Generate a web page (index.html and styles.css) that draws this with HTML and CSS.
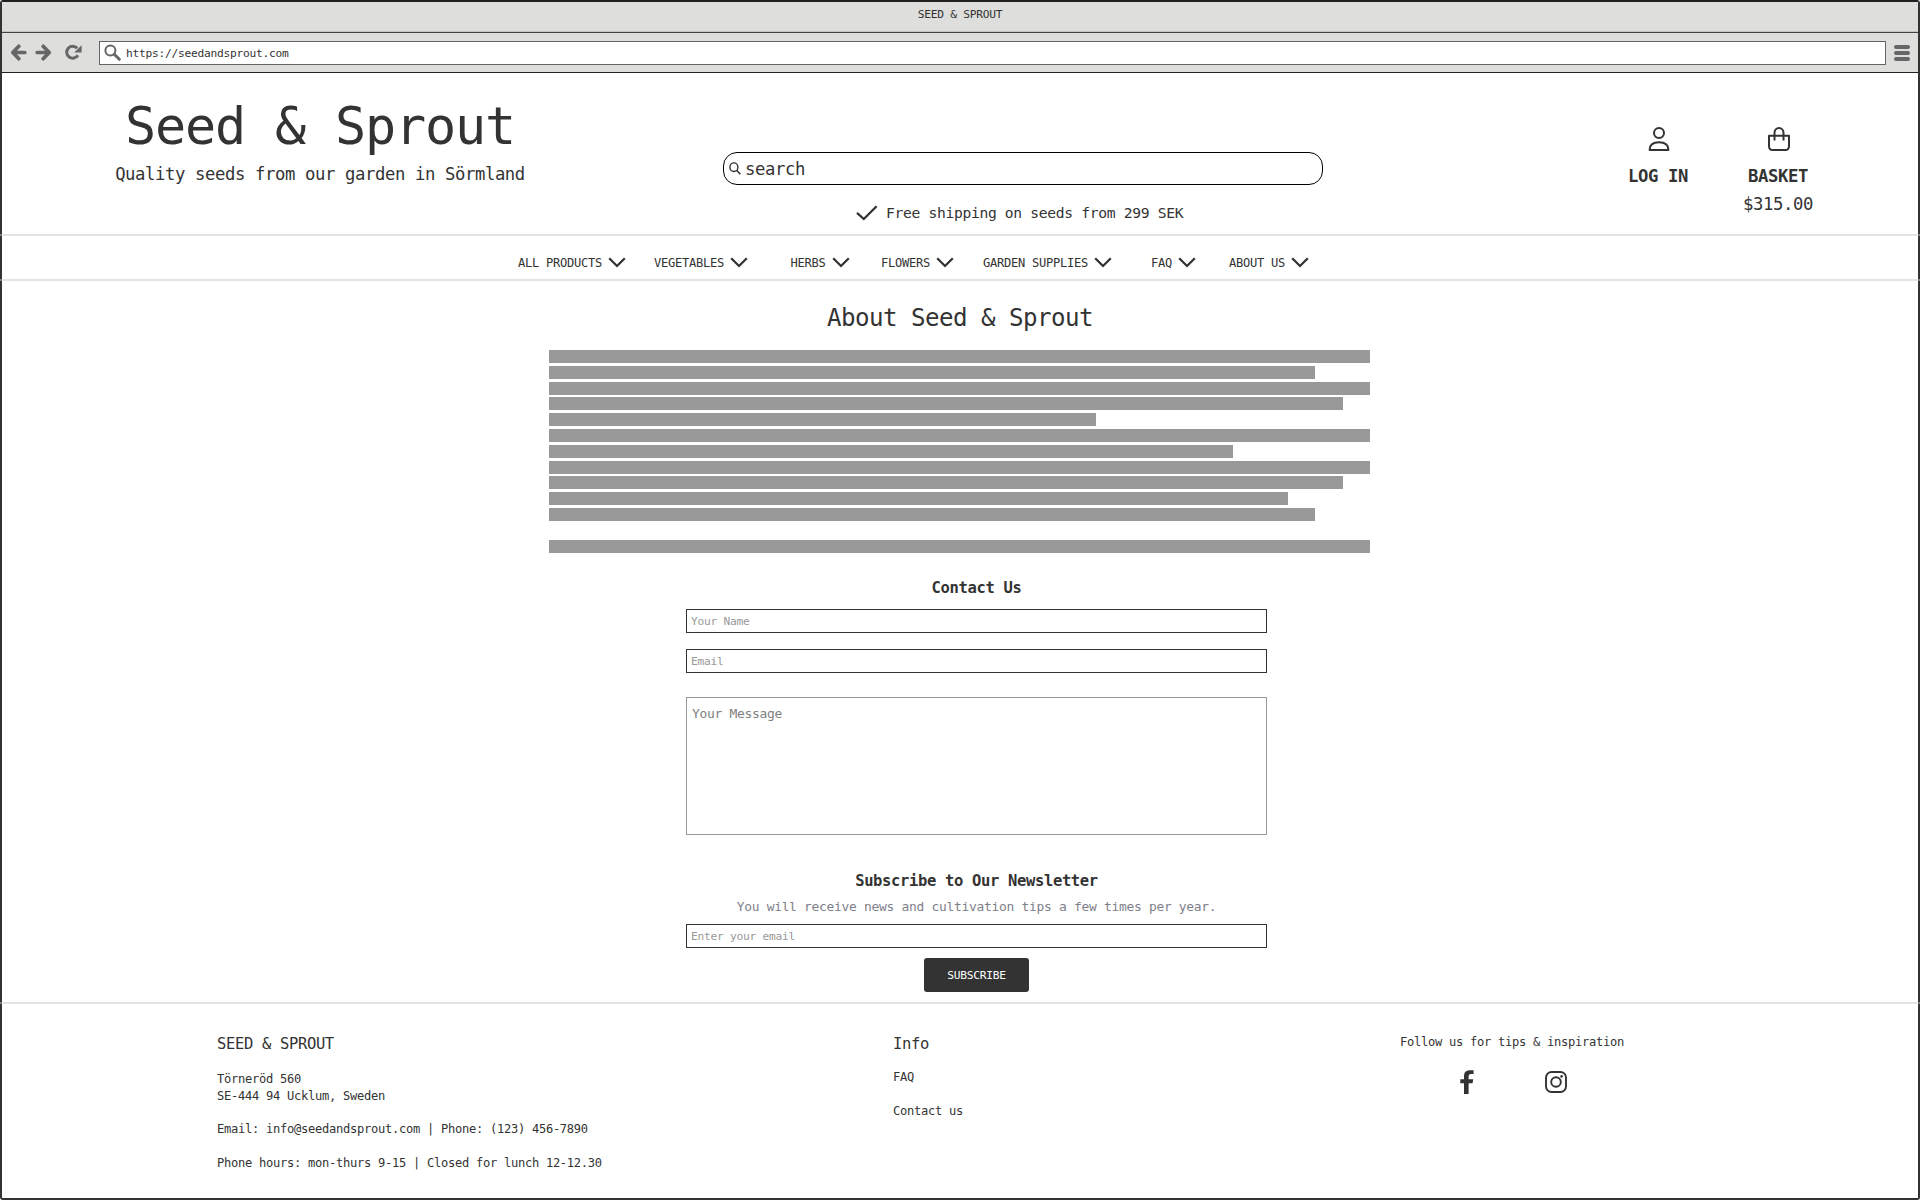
FILE: index.html
```html
<!DOCTYPE html>
<html lang="en">
<head>
<meta charset="utf-8">
<title>Seed &amp; Sprout</title>
<link rel="stylesheet" href="styles.css">
</head>
<body>
<svg width="0" height="0" class="defs">
  <symbol id="chevron" viewBox="0 0 18 11"><path d="M1.2 1.3 9 9 16.8 1.3" fill="none" stroke="#333" stroke-width="2.3"/></symbol>
</svg>
<div class="window">
  <div class="titlebar">SEED &amp; SPROUT</div>
  <div class="toolbar">
    <svg class="back" width="17" height="17" viewBox="0 0 17 17"><path d="M8.8 2.3 2.8 8.5l6 6.2M3.5 8.5h11.3" fill="none" stroke="#666" stroke-width="3.7" stroke-linecap="round" stroke-linejoin="round"/></svg>
    <svg class="forward" width="17" height="17" viewBox="0 0 17 17"><path d="m8.2 2.3 6 6.2-6 6.2M13.5 8.5H2.2" fill="none" stroke="#666" stroke-width="3.7" stroke-linecap="round" stroke-linejoin="round"/></svg>
    <svg class="reload" width="17" height="17" viewBox="0 0 17 17"><path d="M12.9 11.2A6 6 0 1 1 12.2 4.2" fill="none" stroke="#666" stroke-width="3"/><path d="M16.6 1.2v7.2H9.2z" fill="#666"/></svg>
    <div class="address">
      <svg width="17" height="17" viewBox="0 0 17 17"><circle cx="6.4" cy="6.4" r="5" fill="none" stroke="#666" stroke-width="2"/><path d="m10.3 10.3 5 5" stroke="#666" stroke-width="3" stroke-linecap="round"/></svg>
      <span>https://seedandsprout.com</span>
    </div>
    <svg class="menu" width="16" height="16" viewBox="0 0 16 16"><g fill="#666"><rect width="16" height="4" rx="2"/><rect y="6" width="16" height="4" rx="2"/><rect y="12" width="16" height="4" rx="2"/></g></svg>
  </div>

  <header class="header">
    <div class="brand">
      <h1>Seed &amp; Sprout</h1>
      <p>Quality seeds from our garden in Sörmland</p>
    </div>
    <div class="find">
      <div class="search">
        <svg width="12" height="13" viewBox="0 0 12 13"><ellipse cx="4.9" cy="5.2" rx="4" ry="4.3" fill="none" stroke="#333" stroke-width="1.4"/><path d="m7.8 8.5 3.6 3.7" stroke="#333" stroke-width="1.6"/></svg>
        <span>search</span>
      </div>
      <div class="shipping">
        <svg width="22" height="16" viewBox="0 0 22 16"><path d="m1 7.8 6.8 6.2L20.6 1.2" fill="none" stroke="#333" stroke-width="2.3"/></svg>
        <span>Free shipping on seeds from 299 SEK</span>
      </div>
    </div>
    <div class="account login">
      <svg width="22" height="24" viewBox="0 0 22 24"><g fill="none" stroke="#333" stroke-width="2"><circle cx="11" cy="6" r="5"/><path d="M1.6 23C1.6 18 5.3 15.3 11 15.3S20.4 18 20.4 23Z" stroke-linejoin="round"/></g></svg>
      <b>LOG IN</b>
    </div>
    <div class="account basket">
      <svg width="22" height="24" viewBox="0 0 22 24"><g fill="none" stroke="#333" stroke-width="2"><path d="M1 8.8h20v10.4q0 3.8-3.8 3.8H4.8Q1 23 1 19.2z" stroke-linejoin="round"/><path d="M6.5 13.5V5.8a4.5 4.8 0 0 1 9 0v7.7"/></g></svg>
      <b>BASKET</b>
      <span>$315.00</span>
    </div>
  </header>
  <hr>
  <nav class="nav">
    <a>ALL PRODUCTS<svg width="18" height="11"><use href="#chevron"/></svg></a>
    <a class="vegetables">VEGETABLES<svg width="18" height="11"><use href="#chevron"/></svg></a>
    <a class="herbs">HERBS<svg width="18" height="11"><use href="#chevron"/></svg></a>
    <a class="flowers">FLOWERS<svg width="18" height="11"><use href="#chevron"/></svg></a>
    <a class="supplies">GARDEN SUPPLIES<svg width="18" height="11"><use href="#chevron"/></svg></a>
    <a class="faq">FAQ<svg width="18" height="11"><use href="#chevron"/></svg></a>
    <a class="about">ABOUT US<svg width="18" height="11"><use href="#chevron"/></svg></a>
  </nav>
  <hr>
  <main class="main">
    <h2>About Seed &amp; Sprout</h2>
    <div class="bars">
      <i style="width:821px"></i>
      <i style="width:766px"></i>
      <i style="width:821px"></i>
      <i style="width:794px"></i>
      <i style="width:547px"></i>
      <i style="width:821px"></i>
      <i style="width:684px"></i>
      <i style="width:821px"></i>
      <i style="width:794px"></i>
      <i style="width:739px"></i>
      <i style="width:766px"></i>
      <i style="width:0"></i>
      <i style="width:821px"></i>
    </div>
    <div class="form">
      <h3>Contact Us</h3>
      <div class="field">Your Name</div>
      <div class="field email">Email</div>
      <div class="message">Your Message</div>
      <h3 class="newsletter">Subscribe to Our Newsletter</h3>
      <p>You will receive news and cultivation tips a few times per year.</p>
      <div class="field signup">Enter your email</div>
      <div class="button">SUBSCRIBE</div>
    </div>
  </main>
  <hr>
  <footer class="footer">
    <section class="company">
      <h4>SEED &amp; SPROUT</h4>
      <p>Törneröd 560<br>SE-444 94 Ucklum, Sweden</p>
      <p>Email: info@seedandsprout.com | Phone: (123) 456-7890</p>
      <p>Phone hours: mon-thurs 9-15 | Closed for lunch 12-12.30</p>
    </section>
    <section class="info">
      <h4>Info</h4>
      <p>FAQ</p>
      <p>Contact us</p>
    </section>
    <section class="social">
      <p>Follow us for tips &amp; inspiration</p>
      <div class="icons">
        <svg width="14" height="24" viewBox="0 0 14 24"><path d="M4 24V13.2H.3V9.2H4V6Q4 .4 9.4.2L13.6.3V4H10.8Q8.6 4 8.6 6.2v3h4.6l-.6 4h-4V24z" fill="#333"/></svg>
        <svg width="22" height="22" viewBox="0 0 22 22"><g fill="none" stroke="#333" stroke-width="1.9"><rect x="1" y="1" width="20" height="20" rx="5.5"/><circle cx="11" cy="11" r="4.8"/></g><circle cx="16.6" cy="5.4" r="1.3" fill="#333"/></svg>
      </div>
    </section>
  </footer>
</div>
</body>
</html>
```
FILE: styles.css
```css
* { box-sizing: border-box; margin: 0; padding: 0; letter-spacing: -.0227em; }
body {
  width: 1920px; height: 1200px; overflow: hidden; background: #fff;
  font-family: "DejaVu Sans Mono", monospace; color: #333;
}
svg { display: block; flex: none; }
.defs { position: absolute; }
p, span, a, b, h1, h2, h3, h4, .titlebar, .button { white-space: nowrap; }
h1, h2, h4 { font-weight: 400; }
.window {
  width: 1920px; height: 1200px; display: flex; flex-direction: column;
  border: 2px solid #333; border-top-color: #231f20; border-radius: 3px; background: #fff;
}
hr { flex: none; border: 0; height: 2px; margin: 0 -2px; background: rgba(200, 200, 200, .5); }

.titlebar {
  height: 30px; background: #dededc; border-bottom: 1px solid #c4c4c2;
  text-align: center; font-size: 11.22px; line-height: 24px; padding-top: 1px;
}
.toolbar {
  height: 41px; background: #dededc; border-top: 1px solid #444; border-bottom: 1px solid #222;
  display: flex; align-items: center; padding: 0 8px;
}
.forward { margin-left: 8px; }
.reload { margin-left: 13px; }
.address {
  flex: 1; height: 24px; margin: 0 8px 0 17px; padding-left: 4px; background: #fff; border: 1px solid #666;
  display: flex; align-items: center; gap: 5px; font-size: 11.22px;
}
.address span { padding-top: 2px; }

.header { height: 161px; display: flex; align-items: flex-start; }
.brand { width: 410px; margin: 23px 0 0 113px; text-align: center; }
.brand h1 { font-size: 51.8px; line-height: 60px; }
.brand p { font-size: 17.26px; line-height: 24px; margin-top: 6px; }
.find { width: 600px; margin: 79px 0 0 198px; }
.search {
  height: 33px; border: 1px solid #000; border-radius: 14px; padding-left: 5px;
  display: flex; align-items: center; gap: 4px; font-size: 17.26px;
}
.search span { padding-top: 1px; }
.shipping { display: flex; align-items: center; gap: 8px; margin-top: 16px; padding-left: 133px; font-size: 14.67px; line-height: 24px; }
.account { display: flex; flex-direction: column; align-items: center; margin-top: 54px; font-size: 17.26px; line-height: 24px; }
.account svg { margin-left: 2px; }
.account b { margin: 13px 0 4px; }
.login { width: 60px; margin-left: 305px; }
.basket { width: 70px; margin-left: 55px; }

.nav { height: 43px; display: flex; align-items: flex-start; padding: 17px 0 0 516px; font-size: 12.08px; line-height: 20px; }
.nav a { display: flex; align-items: center; gap: 6.5px; }
.nav svg { margin-top: -1px; }
.vegetables { margin-left: 27.5px; }
.herbs { margin-left: 42px; }
.flowers { margin-left: 31px; }
.supplies { margin-left: 28.5px; }
.faq { margin-left: 38.5px; }
.about { margin-left: 32.5px; }

.main { height: 721px; padding-top: 21px; }
.main h2 { font-size: 24.16px; line-height: 32px; text-align: center; }
.bars { width: 821px; margin: 16px 0 0 547px; display: flex; flex-direction: column; gap: 2.8px; }
.bars i { height: 13px; background: #999; }
.form { width: 581px; margin: 23.4px 0 0 684px; display: flex; flex-direction: column; }
.form h3 { font-size: 15.53px; line-height: 24px; text-align: center; }
.field { height: 24px; margin-top: 9px; padding-left: 4px; border: 1px solid #333; font-size: 11.22px; line-height: 23px; color: #999; }
.form .email { margin-top: 16px; }
.message { height: 138px; margin-top: 24px; padding: 6px 0 0 5px; border: 1px solid #999; font-size: 12.95px; line-height: 20px; color: #808080; }
.form .newsletter { margin-top: 34px; }
.form p { margin-top: 4px; font-size: 12.95px; line-height: 20px; text-align: center; color: #80808a; }
.form .signup { margin-top: 7px; }
.button { align-self: center; width: 105px; height: 34px; margin-top: 10px; border-radius: 3px; background: #333; color: #fff; font-size: 11.22px; line-height: 35px; text-align: center; }

.footer { display: flex; align-items: flex-start; padding: 28px 0 0 215px; font-size: 12.08px; line-height: 17px; }
.footer h4 { font-size: 15.53px; line-height: 24px; }
.company { width: 676px; }
.company p { margin-top: 16.5px; }
.company h4 + p { margin-top: 14.5px; }
.info { width: 507px; }
.info p { margin-top: 17px; }
.info h4 + p { margin-top: 12.5px; }
.social { padding-top: 1.5px; }
.icons { display: flex; align-items: center; gap: 71px; margin: 19.5px 0 0 60px; }
```
